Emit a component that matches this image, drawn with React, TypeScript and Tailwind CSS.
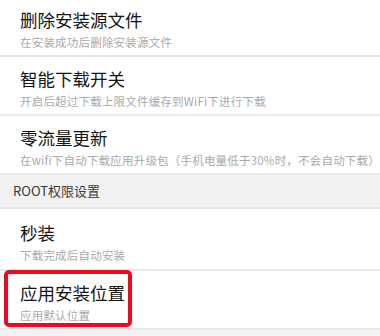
const rows1 = [
  { title: "删除安装源文件", desc: "在安装成功后删除安装源文件" },
  { title: "智能下载开关", desc: "开启后超过下载上限文件缓存到WiFi下进行下载" },
  {
    title: "零流量更新",
    desc: "在wifi下自动下载应用升级包（手机电量低于30%时，不会自动下载）",
  },
];

const SettingRow = ({
  title,
  desc,
  marked,
  tall,
}: {
  title: string;
  desc: string;
  marked?: boolean;
  tall?: boolean;
}) => (
  <div
    className={
      tall
        ? "relative h-[62px] bg-white border-b-2 border-[#e9e9e9] px-5 pt-[14px]"
        : "relative h-[59px] bg-white border-b-2 border-[#e9e9e9] px-5 pt-[12px]"
    }
  >
    <div className="text-[17.5px] leading-[20px] text-[#141414] whitespace-nowrap">
      {title}
    </div>
    <div className="mt-[5px] text-[11.5px] leading-[14px] tracking-[0.2px] text-[#a9a9a9] whitespace-nowrap">
      {desc}
    </div>
    {marked && (
      <div className="absolute left-[4px] top-[-1px] w-[128px] h-[57px] border-[4px] border-[#ec0a1c] rounded-[5px]" />
    )}
  </div>
);

export default function App() {
  return (
    <div
      className="w-[380px] h-[336px] overflow-hidden bg-[#f1f1f1]"
      style={{ fontFamily: '"Noto Sans CJK SC", "Noto Sans", sans-serif' }}
    >
      <div className="-mt-[2px]">
        {rows1.map((r) => (
          <SettingRow key={r.title} title={r.title} desc={r.desc} />
        ))}
      </div>
      <div className="h-[34px] flex items-center px-[13px] bg-[#f1f1f1] border-b-2 border-[#e6e6e6]">
        <span className="text-[13px] text-[#3a3a3a]">ROOT权限设置</span>
      </div>
      <SettingRow title="秒装" desc="下载完成后自动安装" tall />
      <SettingRow title="应用安装位置" desc="应用默认位置" marked />
    </div>
  );
}
